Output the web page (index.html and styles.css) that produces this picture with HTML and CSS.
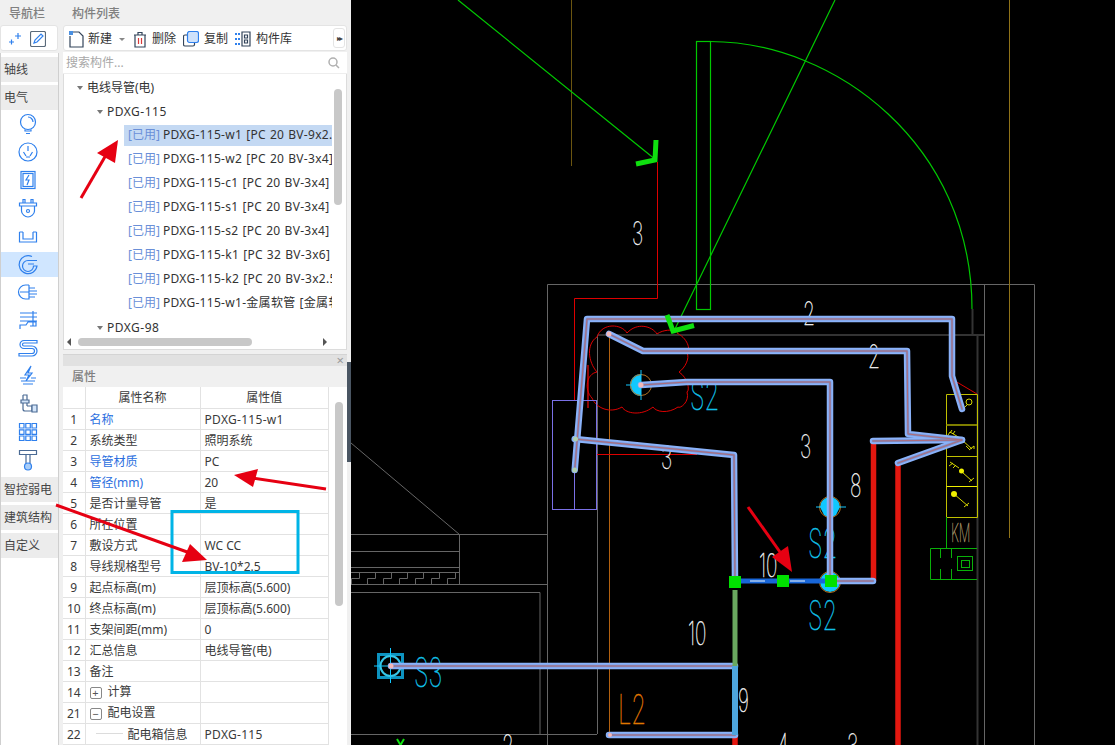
FILE: index.html
```html
<!DOCTYPE html>
<html lang="zh-CN">
<head>
<meta charset="utf-8">
<title>构件列表</title>
<link rel="stylesheet" href="styles.css">
</head>
<body>
<div class="app">
  <aside class="nav">
    <div class="head head-nav">导航栏</div>
    <div class="nav-tools">
      <svg class="ico16" viewBox="0 0 16 16"><path d="M2 11h5M4.500 8.500v5M8 5h6M11 2v6" class="i"/></svg>
      <svg class="ico16 edit" viewBox="0 0 16 16"><rect x=".5" y=".5" width="15" height="15" rx="1.5" class="g"/><path d="M4 12l1-3 6-6 2 2-6 6z" class="i"/></svg>
    </div>
    <div class="nav-body">
      <div class="nav-cat">轴线</div>
      <div class="nav-cat">电气</div>
      <div class="nav-icons">
        <div class="nav-ic"><svg viewBox="0 0 24 24"><circle cx="12" cy="10" r="7.500" class="i"/><path d="M12 5a5 5 0 0 1 5 5M9 17.500v1.500h6v-1.500M10 21.500h4" class="i"/></svg></div>
        <div class="nav-ic"><svg viewBox="0 0 24 24"><circle cx="12" cy="12" r="9" class="i"/><path d="M12 6v5M7.500 12l2.500 4M16.500 12l-2.500 4M10 17h4" class="i"/></svg></div>
        <div class="nav-ic"><svg viewBox="0 0 24 24"><rect x="5" y="3.500" width="14" height="17" class="i"/><rect x="7" y="5.500" width="10" height="13" class="i"/><path d="M13 7l-3 5h3l-2 5" class="i"/></svg></div>
        <div class="nav-ic"><svg viewBox="0 0 24 24"><path d="M3.500 7h17v3h-17zM7 7V3.500h2V7M15 7V3.500h2V7M5.500 10v5c0 3 3.500 6 6.500 6s6.500-3 6.500-6v-5" class="i"/><circle cx="12" cy="15" r="1.500" class="i"/></svg></div>
        <div class="nav-ic"><svg viewBox="0 0 24 24"><path d="M3.500 8v10h17V8M7 8v7h10V8M3.500 8H7M17 8h3.500" class="i"/></svg></div>
        <div class="nav-ic"><svg viewBox="0 0 24 24"><path d="M16 4.500A9 9 0 1 0 21 14h-3.500A5.500 5.500 0 1 1 12 8.500h9M12 12h6" class="i"/></svg></div>
        <div class="nav-ic"><svg viewBox="0 0 24 24"><path d="M13 5H9.500a7 7 0 0 0 0 14H13V5M13 8h6M13 11h8M13 14h8M13 17h6M4 12h9" class="i"/></svg></div>
        <div class="nav-ic"><svg viewBox="0 0 24 24"><path d="M4 5h17M4 9h17M4 13h17M17 3v15M4 21v-4h6l2-3h8v4h-6" class="i"/></svg></div>
        <div class="nav-ic"><svg viewBox="0 0 24 24"><path d="M21 4.500H8a4 4 0 0 0 0 8h8a2.500 2.500 0 0 1 0 5H3v2.500h13a5 5 0 0 0 0-10H8a1.500 1.500 0 0 1 0-3h13z" class="i"/></svg></div>
        <div class="nav-ic"><svg viewBox="0 0 24 24"><path d="M15 2L9 11h4l-3 6 6-8h-4zM4 14h6M15 14h5M5 17h14M7 20h10" class="i"/></svg></div>
        <div class="nav-ic"><svg viewBox="0 0 24 24"><path d="M7 3h4v11M7 3v14a2 2 0 0 0 2 2h7v-5h-5" class="d"/><path d="M5 8h8v3H5zM16 13h5v7h-5z" class="d2"/></svg></div>
        <div class="nav-ic"><svg viewBox="0 0 24 24"><path d="M3.500 3.500h4.500v4.500H3.500zM9.800 3.500h4.500v4.500H9.800zM16 3.500h4.500v4.500H16zM3.500 9.800h4.500v4.500H3.500zM9.800 9.800h4.500v4.500H9.800zM16 9.800h4.500v4.500H16zM3.500 16h4.500v4.500H3.500zM9.800 16h4.500v4.500H9.800zM16 16h4.500v4.500H16z" class="i"/></svg></div>
        <div class="nav-ic"><svg viewBox="0 0 24 24"><path d="M3.500 2.500h17v4h-17zM10 6.500v9M14 6.500v9" class="d"/><circle cx="12" cy="18.500" r="3.500" class="ib"/></svg></div>
      </div>
      <div class="nav-cat low">智控弱电</div>
      <div class="nav-cat">建筑结构</div>
      <div class="nav-cat">自定义</div>
    </div>
  </aside>

  <main class="side">
    <section class="list-panel">
      <div class="head">构件列表</div>
      <div class="toolbar">
        <svg class="ico17" viewBox="0 0 17 17"><path d="M2 5v11h13V5l-4-4H4" class="b"/><rect x="1" y="0" width="4" height="4" class="blue-dots"/></svg>
        <span class="tb-label">新建</span><span class="tb-caret"></span>
        <svg class="ico14" viewBox="0 0 14 17"><path d="M1 4h12M5 4V1.500h4V4M2 4v12h10V4" class="b"/><path d="M5.500 7v6M8.500 7v6" class="r"/></svg>
        <span class="tb-label">删除</span>
        <svg class="ico16t" viewBox="0 0 16 16"><rect x="4.500" y=".5" width="11" height="11" rx="2" class="fb"/><path d="M4 4H2a1.500 1.500 0 0 0-1.500 1.500v8A1.500 1.500 0 0 0 2 15h8a1.500 1.500 0 0 0 1.500-1.500V12" class="b"/></svg>
        <span class="tb-label">复制</span>
        <svg class="ico16t" viewBox="0 0 16 16"><path d="M7 1h8v14H7zM9.500 4h3v3h-3zM9.500 9h3v3h-3z" class="b"/><path d="M0 3h5M0 8h5M0 13h5" class="bl"/></svg>
        <span class="tb-label">构件库</span>
        <span class="more">▸▸</span>
      </div>
      <div class="search">
        <span>搜索构件...</span>
        <svg class="mag" viewBox="0 0 12 12"><circle cx="5" cy="5" r="4" class="m"/><path d="M8 8l3 3" class="m"/></svg>
      </div>
      <div class="tree">
        <div class="tree-rows">
          <div class="row l1"><i class="caret"></i>电线导管(电)</div>
          <div class="row l2"><i class="caret"></i>PDXG-115</div>
          <div class="row l3 sel"><em>[已用]</em> PDXG-115-w1 [PC 20 BV-9x2.5]</div>
          <div class="row l3"><em>[已用]</em> PDXG-115-w2 [PC 20 BV-3x4]</div>
          <div class="row l3"><em>[已用]</em> PDXG-115-c1 [PC 20 BV-3x4]</div>
          <div class="row l3"><em>[已用]</em> PDXG-115-s1 [PC 20 BV-3x4]</div>
          <div class="row l3"><em>[已用]</em> PDXG-115-s2 [PC 20 BV-3x4]</div>
          <div class="row l3"><em>[已用]</em> PDXG-115-k1 [PC 32 BV-3x6]</div>
          <div class="row l3"><em>[已用]</em> PDXG-115-k2 [PC 20 BV-3x2.5]</div>
          <div class="row l3"><em>[已用]</em> PDXG-115-w1-金属软管 [金属软管]</div>
          <div class="row l2"><i class="caret"></i>PDXG-98</div>
        </div>
        <div class="vbar tree-v"></div>
        <div class="hbar"><i class="al"></i><span class="hthumb"></span><i class="ar"></i></div>
      </div>
    </section>

    <section class="prop-panel">
      <div class="prop-strip"><span class="close">×</span></div>
      <div class="head">属性</div>
      <div class="prop-body">
        <table class="props">
          <thead><tr><th class="n"></th><th>属性名称</th><th>属性值</th></tr></thead>
          <tbody>
            <tr><td class="n">1</td><td class="lnk">名称</td><td class="sp">PDXG-115-w1</td></tr>
            <tr><td class="n">2</td><td>系统类型</td><td>照明系统</td></tr>
            <tr><td class="n">3</td><td class="lnk">导管材质</td><td>PC</td></tr>
            <tr><td class="n">4</td><td class="lnk">管径(mm)</td><td>20</td></tr>
            <tr><td class="n">5</td><td>是否计量导管</td><td>是</td></tr>
            <tr><td class="n">6</td><td>所在位置</td><td></td></tr>
            <tr><td class="n">7</td><td>敷设方式</td><td>WC CC</td></tr>
            <tr><td class="n">8</td><td>导线规格型号</td><td>BV-10*2.5</td></tr>
            <tr><td class="n">9</td><td>起点标高(m)</td><td>层顶标高(5.600)</td></tr>
            <tr><td class="n">10</td><td>终点标高(m)</td><td>层顶标高(5.600)</td></tr>
            <tr><td class="n">11</td><td>支架间距(mm)</td><td>0</td></tr>
            <tr><td class="n">12</td><td>汇总信息</td><td>电线导管(电)</td></tr>
            <tr><td class="n">13</td><td>备注</td><td></td></tr>
            <tr><td class="n">14</td><td><span class="tg">+</span>计算</td><td></td></tr>
            <tr><td class="n">21</td><td><span class="tg">−</span>配电设置</td><td></td></tr>
            <tr><td class="n">22</td><td><span class="branch"></span>配电箱信息</td><td class="sp">PDXG-115</td></tr>
          </tbody>
        </table>
        <div class="vbar prop-v"></div>
      </div>
    </section>
  </main>

  <div class="gutter"><span class="grip"></span></div>

  <svg class="cad" viewBox="351 0 764 745">
    <defs>
      <path id="pA" d="M574.700 470L587 319H952V376L962 409"/>
      <path id="pB" d="M609 334L643 351H907L908 434L962 440L898 463"/>
      <path id="pC" d="M641 385L687 382H830V581"/>
      <path id="pD" d="M574.700 439L734 455L735 581"/>
      <path id="pE" d="M873 441L962 440M873 581H832"/>
      <path id="pG" d="M391 666H735"/>
      <path id="pH" d="M609 735H735"/>
    </defs>

    <path class="wall" d="M547.500 745V284.500H1034.500V745M597.500 734V335H984M984.500 284V745M351 734.500H597M540 734V592.500H351M351 584.500H547M351 534.500H547M459.500 534V584M351 443L459.500 534.500M351 551.500H459M351 567.500H459M351 572.500H459"/>
    <path class="wall" d="M351.500 584.500v-6h8v-6h8M367.500 584.500v-6h8v-6h8M383.500 584.500v-6h8v-6h8M399.500 584.500v-6h8v-6h8M415.500 584.500v-6h8v-6h8M431.500 584.500v-6h8v-6h8M447.500 584.500v-6h8v-6"/>
    <path class="dark" d="M977.500 334V745M972.500 309V334"/>
    <path class="brown" d="M571.500 0V166"/>
    <path class="gold" d="M1009.500 0V538"/>
    <path class="orange" d="M609.500 334V735"/>

    <rect class="lg" x="696.500" y="41.500" width="14" height="268"/>
    <path class="lg" d="M710 41.500C835 41.500 972 145 972 309"/>
    <path class="lg" d="M835 0L673 333M458 0L656 160"/>

    <path class="red" d="M657.500 162V298.500H574.500V400M597 454.500H697M950 378L977 394"/>
    <path class="dred" d="M588 365V408"/>
    <path class="red" d="M597 337C602 322 622 324 627 333C637 322 652 326 657 334C665 328 680 330 677 333C690 340 690 352 687 353C690 358 685 368 679 372C688 378 690 390 687 392C690 402 680 409 678 407C668 414 656 412 653 407C642 416 626 414 622 407C610 414 596 408 592 398C584 390 586 374 597 372C588 362 586 344 597 337Z"/>

    <rect class="purple" x="552.500" y="400.500" width="44" height="109"/>
    <path class="purple" d="M574.500 470V510"/>

    <path class="redfat" d="M873.500 441V581"/>
    <path class="redfat" d="M898 464V745"/>
    <path class="redfat" d="M735 735V745"/>

    <path class="yl" d="M946.500 394.500H977.500V517.500H946.500ZM946.500 456.500H977"/>
    <path class="yd" d="M946.500 425H977"/>
    <path class="yb" d="M946.500 486.500H977"/>
    <g class="sym">
      <circle cx="969" cy="402" r="3"/><path d="M967 405L964 408"/>
      <path d="M962 440L972 449M969 450l5-4v3M966 446l4 4M960 438L950 432l-2 3M952 430l-2 3M955 431l-2 3"/>
      <path d="M962 472L972 481M969 482l5-4M950 462l9 6M949 466l4-3M953 468l3-3"/>
      <path d="M954 494L968 506M964 507l5-4"/>
    </g>
    <circle class="ydot" cx="954" cy="494" r="3"/>
    <circle class="ydot" cx="961.500" cy="471" r="2.500"/>

    <path class="gr" d="M946.500 517V548M977 548.500H930.500V579.500H977M940.500 548V558M951.500 548V558M940.500 569V579M951.500 569V579"/>
    <rect class="gr" x="957.500" y="556.500" width="15" height="14"/>
    <rect class="gr" x="961.500" y="560.500" width="8" height="7"/>

    <text class="cad-t tan" x="951" y="542">KM</text>
    <text class="cad-t w" x="632" y="245">3</text>
    <text class="cad-t w" x="803" y="325">2</text>
    <text class="cad-t w" x="868" y="368">2</text>
    <text class="cad-t w" x="800" y="458">3</text>
    <text class="cad-t w" x="661" y="469">3</text>
    <text class="cad-t w" x="850" y="497">8</text>
    <text class="cad-t w" x="759" y="577">10</text>
    <text class="cad-t w" x="688" y="645">10</text>
    <text class="cad-t w" x="738" y="712">9</text>
    <text class="cad-t w" x="777" y="757">4</text>
    <text class="cad-t w" x="847" y="757">3</text>
    <text class="cad-t w" x="502" y="758">2</text>
    <text class="cad-t c big" x="690" y="410">S2</text>
    <text class="cad-t c big" x="808" y="558">S2</text>
    <text class="cad-t c big" x="808" y="630">S2</text>
    <text class="cad-t c big" x="414" y="687">S3</text>
    <text class="cad-t o big" x="618" y="724">L2</text>

    <g class="sw-sq"><rect x="378.500" y="654.500" width="24" height="23"/></g>
    <circle class="sw-ring" cx="390.500" cy="666" r="10"/>
    <path class="sw-x" d="M374 666H408M390.500 648V683"/>
    <path class="sw-fill" d="M641 374a11 11 0 1 0 0 22Z"/>
    <circle class="sw-or" cx="641" cy="385" r="10.500"/>
    <path class="sw-x" d="M626 385H656M641 370V400"/>
    <path class="sw-fill" d="M820 507a10 10 0 0 1 20 0L836 515a10 10 0 0 1-12 0Z"/>
    <circle class="sw-or" cx="830" cy="507" r="10.500"/>
    <path class="sw-x" d="M816 507H846"/>
    <circle class="sw-fill" cx="830" cy="582" r="10"/>
    <circle class="sw-or" cx="830" cy="582" r="10.500"/>

    <g class="pipe-o"><use href="#pA"/><use href="#pB"/><use href="#pC"/><use href="#pD"/><use href="#pE"/><use href="#pG"/><use href="#pH"/></g>
    <g class="pipe-m"><use href="#pA"/><use href="#pB"/><use href="#pC"/><use href="#pD"/><use href="#pE"/><use href="#pG"/><use href="#pH"/></g>
    <g class="pipe-c"><use href="#pA"/><use href="#pB"/><use href="#pC"/><use href="#pD"/><use href="#pE"/><use href="#pG"/><use href="#pH"/></g>

    <path class="arrow-g" d="M667 315L673 331L694 325.500M656 140L655 160L636 164"/>
    <path class="p-green" d="M735 590V666"/>
    <path class="p-cyan" d="M735 666V735"/>
    <path class="p-sel" d="M735 581H831"/>
    <path class="p-sel2" d="M750 581H765M790 581H805"/>
    <circle class="dot-p" cx="609" cy="334" r="2.500"/>
    <circle class="dot-p" cx="641" cy="385" r="2.500"/>
    <circle class="dot-p" cx="391" cy="666" r="2.500"/>
    <circle class="dot-p" cx="610" cy="735" r="2"/>
    <circle class="dot-g" cx="574.700" cy="470" r="2.500"/>
    <circle class="dot-g" cx="575.500" cy="439" r="2.500"/>
    <rect class="grip-g" x="729" y="576" width="12" height="12"/>
    <rect class="grip-g" x="777" y="575" width="12" height="12"/>
    <rect class="grip-g" x="825" y="575" width="12" height="12"/>
    <path class="vy" d="M397 739l3.500 6 3.500-6"/>
  </svg>

  <svg class="marks" viewBox="0 0 1115 745">
    <rect class="cyan-box" x="172" y="511.500" width="126" height="61"/>
    <path class="ar-l" d="M81 198L106 155"/>
    <polygon class="ar-f" points="118,140 97,153 115,163"/>
    <path class="ar-l" d="M326 489L252 478"/>
    <polygon class="ar-f" points="234,475 258,469 253,487"/>
    <path class="ar-l" d="M56 505L190 553"/>
    <polygon class="ar-f" points="207,560 190,544 182,562"/>
    <path class="ar-l" d="M748 507L780 552"/>
    <polygon class="ar-f" points="792,572 772,557 788,546"/>
  </svg>
</div>
</body>
</html>
```
FILE: styles.css
```css
* { box-sizing: border-box; }
html, body { margin: 0; height: 100%; overflow: hidden; background: #f0f0f0; }
body { font: 12px/1 "Noto Sans", "Noto Sans CJK SC", sans-serif; color: #3a3a3a; }

.app { position: relative; display: flex; width: 1115px; height: 745px; padding-top: 3px; }

.head { height: 21px; background: #f0f0f0; color: #808080; font-weight: 500; line-height: 21px; padding-left: 9px; flex: none; }
.head-nav { padding-left: 0; padding-right: 5px; text-align: center; }

/* navigation column */
.nav { width: 59px; flex: none; display: flex; flex-direction: column; }
.nav-tools { height: 26px; margin-top: 1px; padding-top: 2px; background: #fff; border: 1px solid #e4e4e4; border-radius: 3px; display: flex; align-items: center; gap: 7px; padding-left: 6px; margin-right: 1px; }
.ico16 { width: 16px; height: 16px; }
.nav-body { height: 693px; margin-top: 2px; background: #fff; border: solid #cfcfcf; border-width: 0 1px 0 1px; padding-top: 4px; }
.nav-cat { height: 25px; margin-bottom: 3px; background: #ececec; line-height: 25px; padding-left: 3px; color: #444; }
.nav-cat.low { margin-top: 1px; }
.nav-icons { display: flex; flex-direction: column; gap: 3px; height: 364px; margin-top: -1px; }
.nav-ic { height: 25px; flex: none; display: flex; align-items: center; justify-content: center; padding-right: 3px; }
.nav-ic:nth-child(6) { background: #d0e6ff; }
.nav-ic svg { width: 24px; height: 24px; }

.i, .d, .d2, .ib, .g, .b, .r, .fb, .bl, .m { fill: none; stroke-width: 1.2; }
.i { stroke: #2f80ed; }
.d { stroke: #4a6a94; }
.d2 { stroke: #4a6a94; fill: #d5e6fa; }
.ib { stroke: #2f80ed; fill: #a8cdf8; }
.g { stroke: #5a6a7a; }
.b { stroke: #33445a; }
.r { stroke: #d93a3a; }
.fb { stroke: #2f80ed; fill: #cfe2fb; }
.bl { stroke: #2f80ed; stroke-width: 2; stroke-dasharray: 2 1; }
.m { stroke: #b0b0b0; stroke-width: 1.5; }
.blue-dots { fill: #4a90e2; }

/* component list + properties */
.side { width: 284px; flex: none; margin-left: 4px; display: flex; flex-direction: column; gap: 4px; }
.list-panel { height: 347px; display: flex; flex-direction: column; }
.toolbar { height: 26px; margin-top: 1px; padding-top: 2px; background: #fff; border: 1px solid #e4e4e4; border-radius: 3px; display: flex; align-items: center; padding-left: 4px; color: #333; position: relative; flex: none; }
.ico17 { width: 17px; height: 17px; flex: none; }
.ico14 { width: 14px; height: 17px; flex: none; margin-left: 8px; }
.ico16t { width: 16px; height: 16px; flex: none; margin-left: 7px; }
.tb-label { margin-left: 3px; white-space: nowrap; }
.ico14 + .tb-label { margin-left: 5px; }
.ico16t + .tb-label { margin-left: 5px; }
.tb-caret { width: 0; height: 0; border: 3px solid transparent; border-top: 3px solid #888; border-bottom: 0; margin-left: 7px; }
.more { position: absolute; right: 1px; top: 2px; width: 12px; height: 20px; border: 1px solid #e4e4e4; border-radius: 3px; font-size: 8px; line-height: 18px; letter-spacing: -2px; text-align: center; color: #444; }
.search { height: 22px; margin-top: 1px; background: #fff; display: flex; align-items: center; justify-content: space-between; padding: 0 7px 0 3px; color: #a8a8a8; flex: none; border-bottom: 1px solid #eee; }
.mag { width: 12px; height: 12px; }

.tree { position: relative; flex: 1; background: #fff; border: solid #dcdcdc; border-width: 0 1px 1px; overflow: hidden; }
.tree-rows { width: 268px; overflow: hidden; padding-top: 2px; }
.row { height: 24px; line-height: 24px; white-space: nowrap; position: relative; overflow: hidden; color: #333; }
.row em { font-style: normal; color: #6a8fd8; letter-spacing: 0; margin-right: -1px; }
.l1 { padding-left: 24px; }
.l2 { padding-left: 44px; letter-spacing: .5px; }
.l3 { padding-left: 64px; line-height: 22px; letter-spacing: .3px; word-spacing: .6px; }
.sel { background: linear-gradient(#fff 0 1px, #c4d9f3 1px 22px, #fff 22px); margin-left: 60px; padding-left: 4px; }
.caret { display: inline-block; width: 0; height: 0; border: 3.500px solid transparent; border-top: 4px solid #777; border-bottom: 0; margin: 0 4px 2px -11px; vertical-align: middle; }

.vbar { position: absolute; right: 4px; width: 8px; background: #c8c8c8; border-radius: 4px; }
.tree-v { top: 15px; height: 116px; }
.hbar { position: absolute; left: 0; right: 0; bottom: 3px; height: 8px; display: flex; align-items: center; }
.hthumb { position: absolute; left: 14px; width: 174px; height: 8px; background: #c8c8c8; border-radius: 4px; }
.al, .ar { position: absolute; width: 0; height: 0; border: 4px solid transparent; }
.al { left: 3px; border-right: 4px solid #555; border-left: 0; }
.ar { left: 259px; border-left: 4px solid #555; border-right: 0; }

.prop-panel { flex: 1; display: flex; flex-direction: column; min-height: 0; }
.prop-strip { height: 12px; background: #e1e1e1; border-top: 1px solid #d4d4d4; position: relative; flex: none; }
.close { position: absolute; right: 3px; top: -1px; font-size: 13px; line-height: 12px; color: #999; }
.prop-body { position: relative; flex: 1; background: #fff; overflow: hidden; }
.props { border-collapse: collapse; table-layout: fixed; width: 266px; }
.props th:nth-child(1), .props td:nth-child(1) { width: 22px; }
.props th:nth-child(2) { width: 115px; }
.props th, .props td { height: 21px; padding: 2px 0 0 4px; border: 1px solid #e2e2e2; border-top: 0; font-weight: 400; white-space: nowrap; overflow: hidden; text-align: left; color: #3a3a3a; }
.props th { text-align: center; padding: 2px 0 0; }
.props td.n { text-align: center; padding: 2px 0 0; border-left: 0; }
.props th.n { border-left: 0; }
.props td.lnk { color: #2c6fe0; }
.props td.sp { letter-spacing: .3px; }
.tg { display: inline-block; width: 12px; height: 12px; border: 1px solid #888; border-radius: 2px; line-height: 9px; text-align: center; font-size: 11px; margin-right: 6px; vertical-align: -1px; color: #555; }
.branch { display: inline-block; width: 27px; height: 1px; background: #dcdcdc; margin: 0 5px 3px 6px; vertical-align: middle; }
.prop-v { top: 15px; height: 204px; right: 4px; }

.gutter { width: 4px; flex: none; position: relative; }
.grip { position: absolute; left: 0; top: 359px; width: 4px; height: 100px; background: #4a5663; }

/* drawing */
.cad { flex: none; width: 764px; height: 745px; margin-top: -3px; background: #000; display: block; }
.cad path, .cad rect, .cad circle { fill: none; }
.wall { stroke: #666; stroke-width: 1; }
.dark { stroke: #333; stroke-width: 2; }
.brown { stroke: #6b5510; }
.gold { stroke: #8f7218; }
.orange { stroke: #b2600f; }
.lg { stroke: #00c800; stroke-width: 1.200; }
.cad path.arrow-g { stroke: #0fe00f; stroke-width: 5; fill: none; }
.red { stroke: #dd0000; }
.dred { stroke: #8e0505; stroke-width: 2; }
.purple { stroke: #7a70e6; }
.redfat { stroke: #e3170f; stroke-width: 5.500; }
.yl { stroke: #c0c000; }
.yd { stroke: #7e7e00; stroke-width: 2; }
.yb { stroke: #eeee00; }
.sym path, .sym circle { stroke: #d8d800; }
.cad circle.ydot { fill: #f0f000; }
.gr { stroke: #09b009; stroke-width: 1; }
.cad-t { font-family: "Inter", "Roboto", sans-serif; font-weight: 100; font-size: 32px; stroke-width: .5px; transform-box: fill-box; transform-origin: 0 50%; transform: scaleX(.6); }
.w { fill: #f0f0f0; stroke: #f0f0f0; }
.c { fill: #10c0e8; stroke: #10c0e8; }
.o { fill: #e07800; stroke: #e07800; }
.tan { fill: #a89468; stroke: #a89468; font-size: 26px; transform: scaleX(.5); }
.big { font-size: 41px; transform: scaleX(.58); }
.sw-sq rect { stroke: #0d93c0; stroke-width: 3; }
.sw-ring { stroke: #36c6e8; stroke-width: 2; }
.sw-x { stroke: #12c8ff; }
.cad path.sw-fill, .cad circle.sw-fill { fill: #10c8ff; }
.sw-or { stroke: #b07020; }

.pipe-o, .pipe-m, .pipe-c { fill: none; stroke-linejoin: round; stroke-linecap: round; }
.pipe-o { stroke: #8ab2fa; stroke-width: 6.500; }
.pipe-m { stroke: #7d8fc4; stroke-width: 2.500; }
.pipe-c { stroke: #b06a78; stroke-width: 1; }
.p-green { stroke: #69a85f; stroke-width: 5; }
.p-cyan { stroke: #4ea6de; stroke-width: 6; }
.p-sel { stroke: #1866d8; stroke-width: 5; }
.p-sel2 { stroke: #a8c8f0; stroke-width: 1.500; }
.cad circle.dot-p { fill: #f4b8b8; }
.cad circle.dot-g { fill: #b0d0b0; }
.cad rect.grip-g { fill: #00e000; }
.vy { stroke: #10e010; stroke-width: 2; }

/* annotation layer above panels and drawing */
.marks { position: absolute; left: 0; top: 0; width: 1115px; height: 745px; pointer-events: none; }
.cyan-box { fill: none; stroke: #00b4e6; stroke-width: 3; }
.ar-l { stroke: #e60012; stroke-width: 3; fill: none; }
.ar-f { fill: #e60012; }
```
